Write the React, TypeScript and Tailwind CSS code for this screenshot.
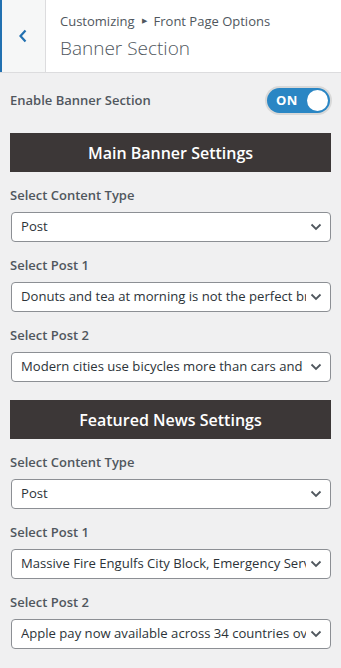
import React from 'react';

const FONT = { fontFamily: '"Open Sans", "Noto Sans", sans-serif' };

function SectionTitle({ title, first }: { title: string; first?: boolean }) {
  return (
    <div className={`mx-[10px] ${first ? 'mt-5' : 'mt-[18px]'} h-[39px] bg-[#3c3737] flex items-center justify-center`}>
      <span className="text-white text-[16px] font-semibold">{title}</span>
    </div>
  );
}

function SelectField({ label, value }: { label: string; value: string }) {
  return (
    <div className="px-[10px] mt-[14px]">
      <div className="text-[13px] font-semibold text-[#50575e] leading-[18px] mb-[8px]">{label}</div>
      <div className="ml-px h-[30px] bg-white border border-[#8c8f94] rounded-[4px] flex items-center pl-[9px] pr-[8px]">
        <span className="flex-1 text-[13.1px] text-[#2c3338] whitespace-nowrap overflow-hidden">{value}</span>
        <svg width="12" height="8" viewBox="0 0 12 8" className="ml-[4px] shrink-0">
          <path d="M1.5 1.5 L6 6 L10.5 1.5" fill="none" stroke="#50575e" strokeWidth="1.8" />
        </svg>
      </div>
    </div>
  );
}

function SettingsGroup({ title, posts, first }: { title: string; posts: [string, string]; first?: boolean }) {
  return (
    <>
      <SectionTitle title={title} first={first} />
      <div className="mt-[4px]">
        <SelectField label="Select Content Type" value="Post" />
        <SelectField label="Select Post 1" value={posts[0]} />
        <SelectField label="Select Post 2" value={posts[1]} />
      </div>
    </>
  );
}

export default function App() {
  return (
    <div className="min-h-screen bg-[#f0f0f1]" style={FONT}>
      <header className="h-[73px] bg-white border-b border-[#dcdcde] flex">
        <button className="w-[46px] h-full bg-[#f6f7f7] border-l-2 border-[#2271b1] border-r border-r-[#dcdcde] flex items-center justify-center">
          <svg width="10" height="14" viewBox="0 0 10 14" className="mr-[2px]">
            <path d="M7.5 1.5 L2.5 7 L7.5 12.5" fill="none" stroke="#2271b1" strokeWidth="2.2" />
          </svg>
        </button>
        <div className="pl-[14px] pt-[11px]">
          <div className="text-[13px] text-[#50575e] leading-[20px] flex items-center">
            Customizing
            <span className="mx-[7px] text-[7px]">▶</span>
            Front Page Options
          </div>
          <div className="text-[19px] font-light text-[#50575e] leading-[28px] mt-[3px]">Banner Section</div>
        </div>
      </header>

      <div className="px-[10px] pt-[15px] flex items-center justify-between">
        <span className="text-[13px] font-semibold text-[#50575e]">Enable Banner Section</span>
        <div className="w-[63px] h-[25px] rounded-full bg-[#2a86c4] ring-2 ring-[#d8d8d8] flex items-center pl-[9px] pr-[2px] justify-between mr-px">
          <span className="text-white text-[13px] font-bold tracking-wide">ON</span>
          <span className="w-[21px] h-[21px] rounded-full bg-white" />
        </div>
      </div>

      <SettingsGroup
        first
        title="Main Banner Settings"
        posts={['Donuts and tea at morning is not the perfect breakfast', 'Modern cities use bicycles more than cars and buses']}
      />
      <SettingsGroup
        title="Featured News Settings"
        posts={['Massive Fire Engulfs City Block, Emergency Services Respond', 'Apple pay now available across 34 countries over the world']}
      />
    </div>
  );
}
